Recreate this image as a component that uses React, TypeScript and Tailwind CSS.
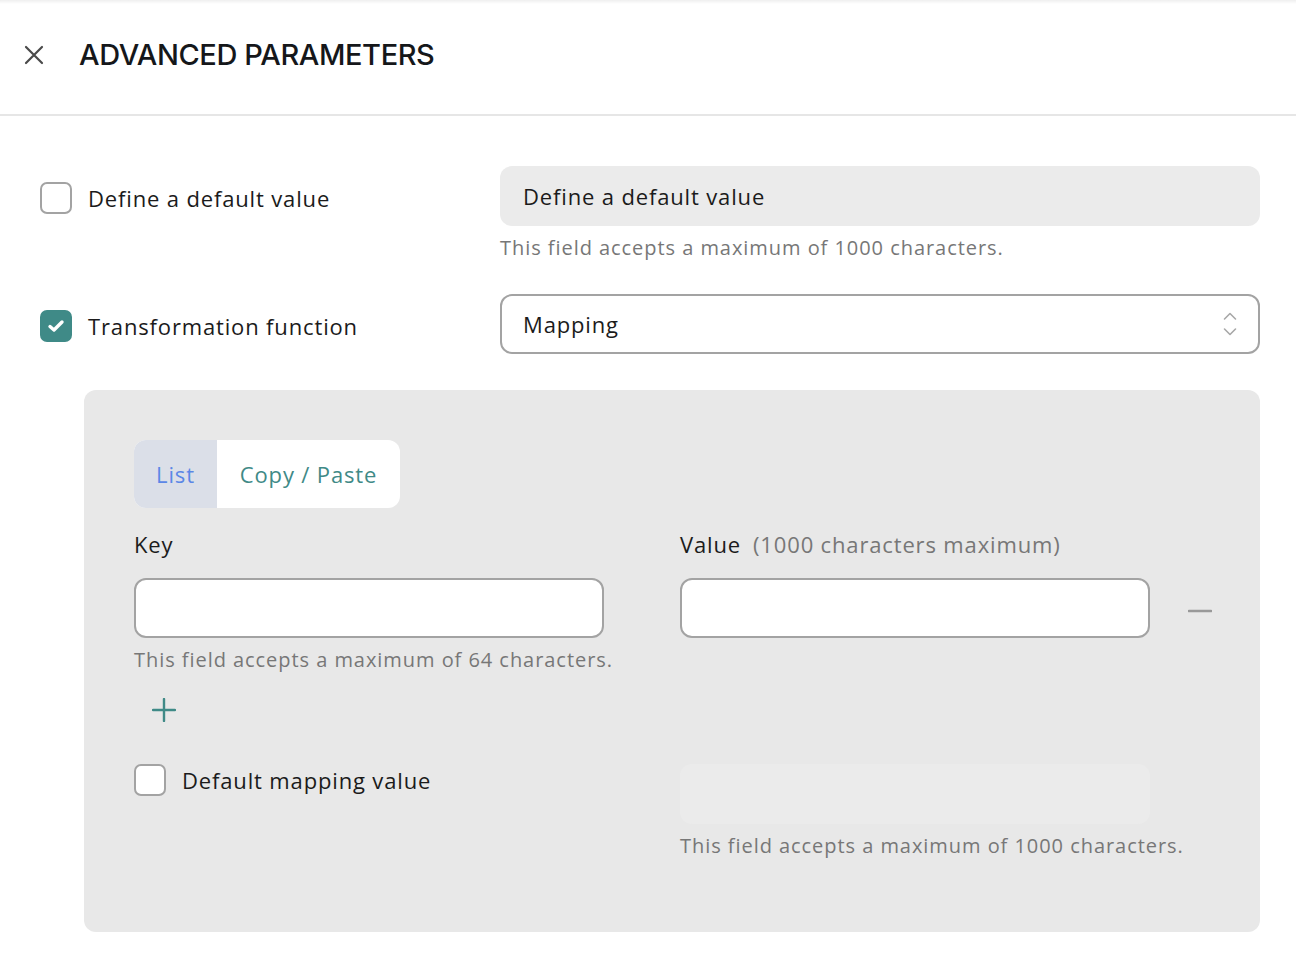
import React, { useState } from 'react';

const FONT = "font-['Open_Sans','Lato',sans-serif]";

const Checkbox: React.FC<{ checked: boolean; onChange: () => void; white?: boolean }> = ({ checked, onChange, white }) => (
  <button
    onClick={onChange}
    className={`w-8 h-8 shrink-0 rounded-[7px] flex items-center justify-center ${
      checked ? 'bg-[#3f8a87]' : `border-2 border-[#a3a3a3] ${white ? 'bg-white' : 'bg-transparent'}`
    }`}
  >
    {checked && (
      <svg width="20" height="20" viewBox="0 0 20 20" fill="none">
        <path d="M4 10.5 L8 14 L16 6" stroke="white" strokeWidth="3.4" strokeLinecap="round" strokeLinejoin="round" />
      </svg>
    )}
  </button>
);

export default function App() {
  const [useDefault, setUseDefault] = useState(false);
  const [useTransform, setUseTransform] = useState(true);
  const [useDefaultMapping, setUseDefaultMapping] = useState(false);
  const [tab, setTab] = useState<'list' | 'paste'>('list');

  return (
    <div className={`w-[1296px] h-[958px] bg-white text-[#1b1b1b] ${FONT}`}>
      <div className="h-[4px] bg-gradient-to-b from-[#efefef] to-white" />

      {/* header */}
      <div className="h-[112px] flex items-center border-b-2 border-[#e6e6e6] pl-[24px] pb-[8px]">
        <button className="w-5 h-5 text-[#4a4a4a]">
          <svg width="20" height="20" viewBox="0 0 20 20" fill="none">
            <path d="M2 2 L18 18 M18 2 L2 18" stroke="currentColor" strokeWidth="2.2" strokeLinecap="round" />
          </svg>
        </button>
        <h1 className="ml-[35px] font-['Inter',sans-serif] text-[29px] font-medium tracking-[-0.4px] text-[#15171a]">
          ADVANCED PARAMETERS
        </h1>
      </div>

      <div className="pl-10 pr-[36px] pt-[50px] text-[22px] leading-[28px] tracking-[0.85px]">
        {/* default value row */}
        <div className="flex">
          <div className="w-[460px] flex items-center gap-[16px] h-[64px]">
            <Checkbox checked={useDefault} onChange={() => setUseDefault(!useDefault)} />
            <span>Define a default value</span>
          </div>
          <div className="flex-1">
            <div className="h-[60px] rounded-[12px] bg-[#ebebeb] flex items-center px-[23px]">
              Define a default value
            </div>
            <p className="mt-[8px] text-[20px] tracking-[0.95px] text-[#777777]">This field accepts a maximum of 1000 characters.</p>
          </div>
        </div>

        {/* transformation row */}
        <div className="flex mt-[32px]">
          <div className="w-[460px] flex items-center gap-[16px] h-[64px]">
            <Checkbox checked={useTransform} onChange={() => setUseTransform(!useTransform)} />
            <span>Transformation function</span>
          </div>
          <div className="flex-1">
            <div className="h-[60px] rounded-[12px] border-2 border-[#a3a3a3] flex items-center justify-between pl-[21px] pr-[20px]">
              <span>Mapping</span>
              <svg width="16" height="26" viewBox="0 0 16 26" fill="none">
                <path d="M2.5 8 L8 2.5 L13.5 8" stroke="#a8a8a8" strokeWidth="1.6" strokeLinecap="round" strokeLinejoin="round" />
                <path d="M2.5 18 L8 23.5 L13.5 18" stroke="#a8a8a8" strokeWidth="1.6" strokeLinecap="round" strokeLinejoin="round" />
              </svg>
            </div>
          </div>
        </div>

        {/* mapping panel */}
        <div className="ml-[44px] mt-[32px] rounded-[12px] bg-[#e8e8e8] pl-[50px] pr-[48px] pt-[50px] h-[542px]">
          <div className="inline-flex h-[68px] rounded-[12px] overflow-hidden bg-white">
            <button
              onClick={() => setTab('list')}
              className={`w-[83px] ${tab === 'list' ? 'bg-[#dbdfe8] text-[#5b87e6]' : 'text-[#3f8a87]'}`}
            >
              List
            </button>
            <button
              onClick={() => setTab('paste')}
              className={`w-[183px] ${tab === 'paste' ? 'bg-[#dbdfe8] text-[#5b87e6]' : 'text-[#3f8a87]'}`}
            >
              Copy / Paste
            </button>
          </div>

          <div className="flex mt-[20px]">
            <div className="w-[470px]">
              <div className="h-[32px] flex items-center">Key</div>
              <div className="mt-[18px] h-[60px] rounded-[12px] border-2 border-[#a3a3a3] bg-white" />
              <p className="mt-[8px] text-[20px] tracking-[0.95px] text-[#777777] whitespace-nowrap">This field accepts a maximum of 64 characters.</p>
            </div>
            <div className="w-[470px] ml-[76px]">
              <div className="h-[32px] flex items-center whitespace-nowrap">
                Value<span className="ml-[12px] text-[#777777]">(1000 characters maximum)</span>
              </div>
              <div className="mt-[18px] h-[60px] rounded-[12px] border-2 border-[#a3a3a3] bg-white" />
            </div>
            <button className="ml-[38px] mt-[53px] h-[60px] flex items-center text-[#999999]">
              <svg width="24" height="4" viewBox="0 0 24 4" fill="none">
                <path d="M1 2 H23" stroke="currentColor" strokeWidth="2.6" strokeLinecap="round" />
              </svg>
            </button>
          </div>

          <button className="block ml-[18px] mt-[24px] w-6 h-6 text-[#3f8a87]">
            <svg width="24" height="24" viewBox="0 0 24 24" fill="none">
              <path d="M12 1 V23 M1 12 H23" stroke="currentColor" strokeWidth="2.4" strokeLinecap="round" />
            </svg>
          </button>

          <div className="flex mt-[42px]">
            <div className="w-[470px] flex items-center gap-[16px] h-[32px]">
              <Checkbox white checked={useDefaultMapping} onChange={() => setUseDefaultMapping(!useDefaultMapping)} />
              <span>Default mapping value</span>
            </div>
            <div className="w-[470px] ml-[76px]">
              <div className="h-[60px] rounded-[12px] bg-[#ebebeb]" />
              <p className="mt-[8px] text-[20px] tracking-[0.95px] text-[#777777] whitespace-nowrap">This field accepts a maximum of 1000 characters.</p>
            </div>
          </div>
        </div>
      </div>
    </div>
  );
}
